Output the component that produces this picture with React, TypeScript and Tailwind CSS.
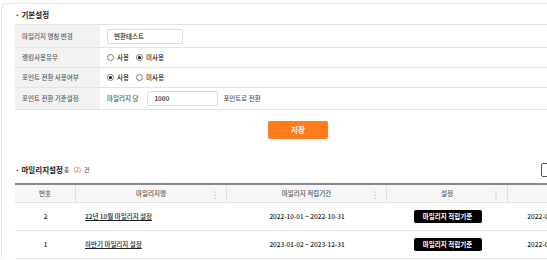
import React from "react";

const Radio = ({ checked, label }: { checked: boolean; label: string }) => (
  <span className="flex items-center gap-[3px]">
    <span className="flex h-[7px] w-[7px] items-center justify-center rounded-full border border-[#7a7a7a] bg-white">
      {checked && <span className="h-[3px] w-[3px] rounded-full bg-[#111]" />}
    </span>
    <span className="text-[#222]">{label}</span>
  </span>
);

const Kebab = () => (
  <svg width="2" height="8" viewBox="0 0 2 8" className="absolute right-[10px] top-[6px]">
    <circle cx="1" cy="1" r="0.6" fill="#9a9a9a" />
    <circle cx="1" cy="4" r="0.6" fill="#9a9a9a" />
    <circle cx="1" cy="7" r="0.6" fill="#9a9a9a" />
  </svg>
);

const SETTINGS = [
  { label: "마일리지 명칭 변경", h: "h-[23px]" },
  { label: "랭킹사용유무", h: "h-[20px]" },
  { label: "포인트 전환 사용여부", h: "h-[20px]" },
  { label: "포인트 전환 기준설정", h: "h-[22px]" },
];

const ROWS = [
  { no: 2, name: "22년 10월 마일리지 설정", period: "2022-10-01 ~ 2022-10-31", date: "2022-09-01" },
  { no: 1, name: "하반기 마일리지 설정", period: "2023-01-02 ~ 2023-12-31", date: "2022-09-01" },
];

const HEADERS = ["번호", "마일리지명", "마일리지 적립기간", "설정", ""];

export default function App() {
  const values = [
    <div key="0" className="flex h-[15px] w-[76px] items-center rounded-[2px] border border-[#dcdcdc] pl-[6px] text-[#222]">
      변환테스트
    </div>,
    <div key="1" className="flex items-center gap-[7px]">
      <Radio checked={false} label="사용" />
      <Radio checked label="미사용" />
    </div>,
    <div key="2" className="flex items-center gap-[7px]">
      <Radio checked label="사용" />
      <Radio checked={false} label="미사용" />
    </div>,
    <div key="3" className="flex items-center">
      <span className="text-[#555]">마일리지 당</span>
      <div className="ml-[9px] flex h-[15px] w-[71px] items-center rounded-[2px] border border-[#dcdcdc] pl-[6px] text-[#111]">
        1000
      </div>
      <span className="ml-[5px] text-[#555]">포인트로 전환</span>
    </div>,
  ];

  return (
    <div className="h-[260px] w-[547px] overflow-hidden bg-white font-['Noto_Sans_CJK_KR','Noto_Sans',sans-serif] text-[6.5px] font-medium leading-none">
      <div className="ml-[1px] mt-[3px] w-[600px] rounded-tl-[6px] border-l border-t border-[#e6e6e6] pl-[13px] pt-[5px]">
        <div className="w-[566px]">
          {/* 기본설정 */}
          <div className="mb-[3px] flex h-[12px] items-center text-[7.5px] font-bold text-[#1a1a1a]">
            <span className="mr-[2px]">·</span>기본설정
          </div>
          <div className="border-t border-[#e3e3e3]">
            {SETTINGS.map((s, i) => (
              <div key={s.label} className={`flex border-b border-[#e3e3e3] ${s.h}`}>
                <div className="flex w-[85px] items-center bg-[#f2f2f2] pl-[7px] text-[#5a5a5a]">{s.label}</div>
                <div className="flex flex-1 items-center pl-[7px]">{values[i]}</div>
              </div>
            ))}
          </div>

          <div className="mt-[11px] flex justify-center">
            <button className="h-[18px] w-[60px] rounded-[2px] bg-[#ff7b1c] text-[7.5px] font-bold text-white">
              저장
            </button>
          </div>

          {/* 마일리지설정 */}
          <div className="mt-[24px] flex h-[14px] items-center justify-between">
            <div className="flex items-center text-[#1a1a1a]">
              <span className="text-[7.5px] font-bold">
                <span className="mr-[2px]">·</span>마일리지설정
              </span>
              <span className="ml-[1px] text-[6px] text-[#555]">총</span>
              <span className="ml-[4px] text-[6px] text-[#f26b1d]">(2)</span>
              <span className="ml-[3px] text-[6px] text-[#555]">건</span>
            </div>
            <div className="h-[14px] w-[40px] rounded-[2px] border border-[#555] bg-white" />
          </div>

          <div className="mt-[6px] border-t-2 border-[#8a8a8a]">
            <div className="grid h-[18px] grid-cols-[61px_151px_160px_121px_73px] border-b border-[#e3e3e3] bg-[#f6f6f6] text-[#555]">
              {HEADERS.map((h, i) => (
                <div key={i} className="relative flex items-center justify-center border-r border-[#e0e0e0]">
                  {h}
                  {i > 0 && i < 4 && <Kebab />}
                </div>
              ))}
            </div>
            {ROWS.map((r) => (
              <div
                key={r.no}
                className="grid h-[28px] grid-cols-[61px_151px_160px_121px_73px] border-b border-[#e6e6e6] text-[#222]"
              >
                <div className="flex items-center justify-center">{r.no}</div>
                <div className="flex items-center pl-[9px]">
                  <span className="underline underline-offset-[1px]">{r.name}</span>
                </div>
                <div className="flex items-center justify-center">{r.period}</div>
                <div className="flex items-center justify-center">
                  <span className="flex h-[13px] w-[68px] items-center justify-center rounded-[2px] bg-black font-bold text-white">
                    마일리지 적립기준
                  </span>
                </div>
                <div className="flex items-center justify-center">{r.date}</div>
              </div>
            ))}
          </div>
        </div>
      </div>
    </div>
  );
}
